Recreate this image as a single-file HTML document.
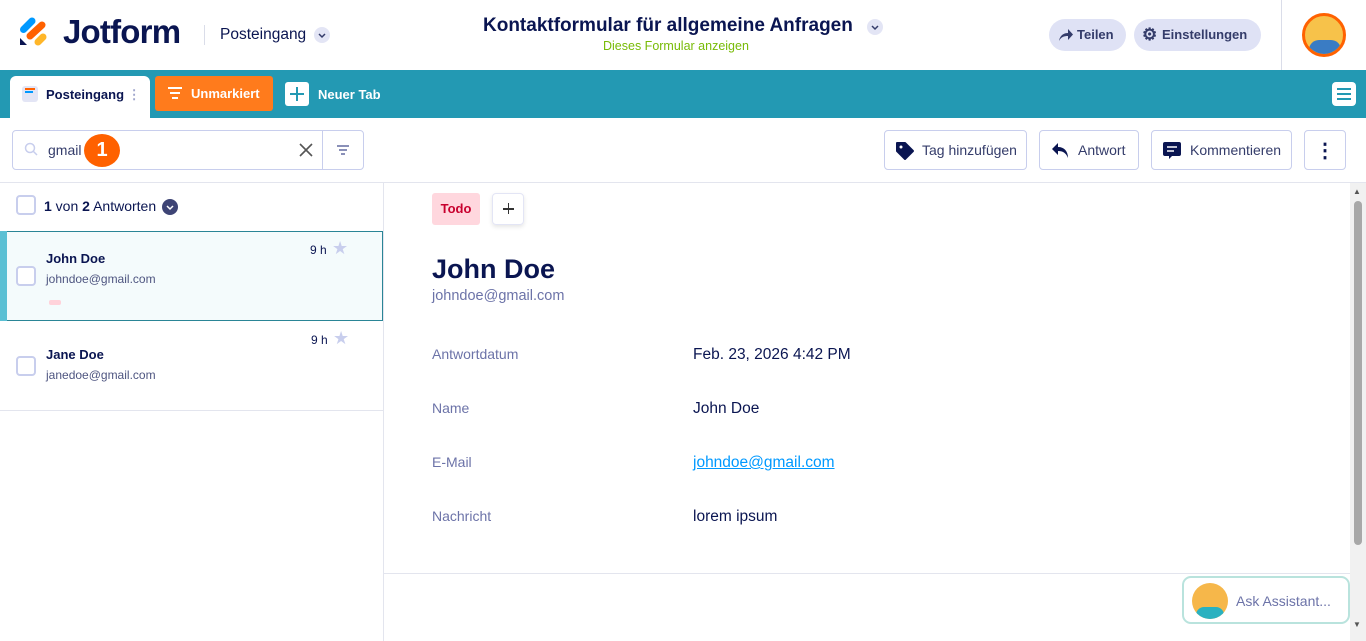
<!DOCTYPE html>
<html><head><meta charset="utf-8"><style>
*{box-sizing:border-box;margin:0;padding:0}
body{width:1366px;height:641px;overflow:hidden;background:#fff;font-family:"Liberation Sans",sans-serif;color:#0a1551;position:relative}
.a{position:absolute}
.btn{position:absolute;top:130px;height:40px;border:1px solid #c8ceed;border-radius:4px;background:#fff;display:flex;align-items:center;font-size:14px;color:#343c6a}
.lbl{font-size:14px;color:#6c73a8}
.val{font-size:15.5px;color:#0a1551}
.cb{position:absolute;width:20px;height:20px;border:2px solid #c8ceed;border-radius:4px;background:#fff}
</style></head><body>
<!-- header -->
<svg class="a" style="left:19px;top:17px" width="30" height="30" viewBox="0 0 30 30"><line x1="4.5" y1="12.5" x2="13" y2="4" stroke="#0099ff" stroke-width="7" stroke-linecap="round"/><line x1="11" y1="19" x2="23" y2="8" stroke="#ff6100" stroke-width="7" stroke-linecap="round"/><line x1="19" y1="25" x2="24" y2="20" stroke="#ffb629" stroke-width="7" stroke-linecap="round"/><path d="M1 21 L1 28 L8 28 Z" fill="#0a1551"/></svg>
<div class="a" style="left:63px;top:13px;font-size:33px;font-weight:bold;color:#0a1551;letter-spacing:-0.8px">Jotform</div>
<div class="a" style="left:204px;top:25px;width:1px;height:20px;background:#dadde9"></div>
<div class="a" style="left:220px;top:26px;font-size:15.5px">Posteingang</div>
<div class="a" style="left:314px;top:27px;width:16px;height:16px;border-radius:50%;background:#e3e5f5"><svg width="16" height="16"><path d="M5 7 L8 10 L11 7" stroke="#343c6a" stroke-width="1.5" fill="none"/></svg></div>
<div class="a" style="left:483px;top:15px;font-size:19px;font-weight:bold">Kontaktformular für allgemeine Anfragen</div>
<div class="a" style="left:867px;top:19px;width:16px;height:16px;border-radius:50%;background:#e3e5f5"><svg width="16" height="16"><path d="M5 7 L8 10 L11 7" stroke="#343c6a" stroke-width="1.5" fill="none"/></svg></div>
<div class="a" style="left:603px;top:39px;font-size:12.5px;color:#78bb07">Dieses Formular anzeigen</div>
<div class="a" style="left:1049px;top:19px;width:77px;height:32px;border-radius:16px;background:#dfe2f5;font-size:13px;font-weight:bold;color:#343c6a;line-height:32px;padding-left:28px">Teilen<svg class="a" style="left:9px;top:9px" width="16" height="14"><path d="M1 13 C2 7 6 5 10 5 L10 1 L15 6.5 L10 12 L10 8 C6 8 3 9 1 13Z" fill="#343c6a"/></svg></div>
<div class="a" style="left:1134px;top:19px;width:127px;height:32px;border-radius:16px;background:#dfe2f5;font-size:13px;font-weight:bold;color:#343c6a;line-height:32px;padding-left:28px">Einstellungen<span class="a" style="left:8px;top:0;font-size:17px">&#9881;</span></div>
<div class="a" style="left:1281px;top:0;width:1px;height:70px;background:#dadde9"></div>
<div class="a" style="left:1302px;top:13px;width:44px;height:44px;border-radius:50%;border:3px solid #ff6100;background:#f7c24a;overflow:hidden"><div class="a" style="left:4px;top:24px;width:32px;height:20px;background:#3a7cc4;border-radius:10px 10px 0 0"></div></div>
<!-- teal bar -->
<div class="a" style="left:0;top:70px;width:1366px;height:48px;background:#2399b3"></div>
<div class="a" style="left:10px;top:76px;width:140px;height:42px;background:#fff;border-radius:6px 6px 0 0"></div>
<div class="a" style="left:22px;top:86px;width:16px;height:16px;background:#e3e5f5;border-radius:3px"><div class="a" style="left:3px;top:2px;width:10px;height:2px;background:#ff6100"></div><div class="a" style="left:3px;top:5px;width:8px;height:2px;background:#09f"></div></div>
<div class="a" style="left:46px;top:87px;font-size:13px;font-weight:bold">Posteingang <span style="color:#a0a6cc">&#8942;</span></div>
<div class="a" style="left:155px;top:76px;width:118px;height:35px;background:#ff7b1c;border-radius:3px;color:#fff;font-size:13px;font-weight:bold;line-height:35px;padding-left:36px">Unmarkiert<div class="a" style="left:13px;top:11px;width:14px;height:2px;background:#fff"></div><div class="a" style="left:15px;top:16px;width:10px;height:2px;background:#fff"></div><div class="a" style="left:17px;top:21px;width:6px;height:2px;background:#fff"></div></div>
<div class="a" style="left:285px;top:82px;width:24px;height:24px;background:#fff;border-radius:3px"><div class="a" style="left:5px;top:11px;width:14px;height:2px;background:#2399b3"></div><div class="a" style="left:11px;top:5px;width:2px;height:14px;background:#2399b3"></div></div>
<div class="a" style="left:318px;top:87px;font-size:13px;font-weight:bold;color:#fff">Neuer Tab</div>
<div class="a" style="left:1332px;top:82px;width:24px;height:24px;background:#fff;border-radius:4px"><div class="a" style="left:5px;top:6px;width:14px;height:2px;background:#2399b3;box-shadow:0 5px 0 #2399b3,0 10px 0 #2399b3"></div></div>
<!-- toolbar -->
<div class="a" style="left:12px;top:130px;width:352px;height:40px;border:1px solid #c8ceed;border-radius:4px"></div>
<div class="a" style="left:322px;top:131px;width:1px;height:38px;background:#c8ceed"></div>
<svg class="a" style="left:24px;top:142px" width="14" height="14"><circle cx="6" cy="6" r="4.5" stroke="#c8ceed" stroke-width="1.5" fill="none"/><line x1="9.5" y1="9.5" x2="13" y2="13" stroke="#c8ceed" stroke-width="1.5"/></svg>
<div class="a" style="left:48px;top:142px;font-size:14px;color:#343c6a">gmail</div>
<div class="a" style="left:84px;top:134px;width:36px;height:33px;border-radius:50%;background:#ff6100;color:#fff;font-weight:bold;font-size:20px;text-align:center;line-height:33px">1</div>
<svg class="a" style="left:299px;top:143px" width="14" height="14"><path d="M1 1L13 13M13 1L1 13" stroke="#555" stroke-width="1.6"/></svg>
<div class="a" style="left:337px;top:145px;width:12px;height:1.5px;background:#8a90b8"></div><div class="a" style="left:339px;top:149px;width:8px;height:1.5px;background:#8a90b8"></div><div class="a" style="left:341px;top:153px;width:4px;height:1.5px;background:#8a90b8"></div>
<div class="btn" style="left:884px;width:143px;padding-left:37px">Tag hinzufügen<svg class="a" style="left:10px;top:10px" width="20" height="20"><path d="M2 2 L10 2 L18 10 L10 18 L2 10 Z" fill="#0a1551" stroke="#0a1551" stroke-linejoin="round" stroke-width="2"/><circle cx="6" cy="6" r="1.5" fill="#fff"/></svg></div>
<div class="btn" style="left:1039px;width:100px;padding-left:38px">Antwort<svg class="a" style="left:11px;top:10px" width="18" height="18"><path d="M7 2 L1 8 L7 14 L7 10 C12 10 15 12 17 17 C17 10 13 6 7 6 Z" fill="#0a1551"/></svg></div>
<div class="btn" style="left:1151px;width:141px;padding-left:38px">Kommentieren<svg class="a" style="left:11px;top:11px" width="18" height="18"><path d="M2 0 H16 A2 2 0 0 1 18 2 V12 A2 2 0 0 1 16 14 H9 L6 17 V14 H2 A2 2 0 0 1 0 12 V2 A2 2 0 0 1 2 0Z" fill="#0a1551"/><path d="M4 5H14M4 9H11" stroke="#fff" stroke-width="1.5"/></svg></div>
<div class="btn" style="left:1304px;width:42px;justify-content:center;font-size:20px;font-weight:bold;color:#0a1551">&#8942;</div>
<div class="a" style="left:0;top:182px;width:1366px;height:1px;background:#e3e5ee"></div>
<!-- left list -->
<div class="a" style="left:383px;top:183px;width:1px;height:458px;background:#e3e5ee"></div>
<div class="cb" style="left:16px;top:195px"></div>
<div class="a" style="left:44px;top:198px;font-size:14px;color:#0a1551"><b>1</b> von <b>2</b> Antworten</div>
<div class="a" style="left:162px;top:199px;width:16px;height:16px;border-radius:50%;background:#3e4475"><svg width="16" height="16"><path d="M5 7 L8 10 L11 7" stroke="#fff" stroke-width="1.5" fill="none"/></svg></div>
<div class="a" style="left:0;top:231px;width:383px;height:90px;background:#f4fbfc;border:1px solid #2a8596"></div>
<div class="a" style="left:0;top:231px;width:7px;height:90px;background:#5bc0d4"></div>
<div class="cb" style="left:16px;top:266px"></div>
<div class="a" style="left:46px;top:251px;font-size:13px;font-weight:bold">John Doe</div>
<div class="a" style="left:46px;top:272px;font-size:12px;color:#4e5580">johndoe@gmail.com</div>
<div class="a" style="left:49px;top:300px;width:12px;height:5px;background:#ffd2da;border-radius:2px"></div>
<div class="a" style="left:310px;top:243px;font-size:12px">9 h</div>
<div class="a" style="left:332px;top:238px;font-size:18px;color:#c8ceed">&#9733;</div>
<div class="cb" style="left:16px;top:356px"></div>
<div class="a" style="left:46px;top:347px;font-size:13px;font-weight:bold">Jane Doe</div>
<div class="a" style="left:46px;top:368px;font-size:12px;color:#4e5580">janedoe@gmail.com</div>
<div class="a" style="left:311px;top:333px;font-size:12px">9 h</div>
<div class="a" style="left:333px;top:328px;font-size:18px;color:#c8ceed">&#9733;</div>
<div class="a" style="left:0;top:410px;width:383px;height:1px;background:#e3e5ee"></div>
<!-- right detail -->
<div class="a" style="left:432px;top:193px;width:48px;height:32px;background:#ffd7de;border-radius:3px;color:#c8002e;font-size:13px;font-weight:bold;text-align:center;line-height:32px">Todo</div>
<div class="a" style="left:492px;top:193px;width:32px;height:32px;border:1px solid #e3e5f5;border-radius:4px;box-shadow:0 2px 4px rgba(0,0,0,.1)"><div class="a" style="left:10px;top:14px;width:11px;height:1.5px;background:#333"></div><div class="a" style="left:14.8px;top:9.3px;width:1.5px;height:11px;background:#333"></div></div>
<div class="a" style="left:432px;top:254px;font-size:27px;font-weight:bold">John Doe</div>
<div class="a" style="left:432px;top:288px;font-size:14.5px;color:#6c73a8">johndoe@gmail.com</div>
<div class="a lbl" style="left:432px;top:346px">Antwortdatum</div><div class="a val" style="left:693px;top:346px">Feb. 23, 2026 4:42 PM</div>
<div class="a lbl" style="left:432px;top:400px">Name</div><div class="a val" style="left:693px;top:400px">John Doe</div>
<div class="a lbl" style="left:432px;top:454px">E-Mail</div><div class="a val" style="left:693px;top:454px;color:#0099ff;text-decoration:underline">johndoe@gmail.com</div>
<div class="a lbl" style="left:432px;top:508px">Nachricht</div><div class="a val" style="left:693px;top:508px">lorem ipsum</div>
<div class="a" style="left:384px;top:573px;width:966px;height:1px;background:#e3e5ee"></div>
<!-- scrollbar -->
<div class="a" style="left:1350px;top:183px;width:16px;height:458px;background:#f1f1f1"></div>
<div class="a" style="left:1354px;top:201px;width:8px;height:344px;background:#a8a8a8;border-radius:4px"></div>
<div class="a" style="left:1353px;top:187px;font-size:8px;color:#555">&#9650;</div>
<div class="a" style="left:1353px;top:620px;font-size:8px;color:#555">&#9660;</div>
<!-- assistant -->
<div class="a" style="left:1182px;top:576px;width:168px;height:48px;border:2px solid #b9e3dd;border-radius:9px;background:#fff"></div>
<div class="a" style="left:1192px;top:583px;width:36px;height:36px;border-radius:50%;background:#f6b74a;overflow:hidden"><div class="a" style="left:4px;top:24px;width:28px;height:14px;background:#29b1c0;border-radius:8px 8px 0 0"></div></div>
<div class="a" style="left:1236px;top:593px;font-size:14px;color:#6c73a8">Ask Assistant...</div>
</body></html>
